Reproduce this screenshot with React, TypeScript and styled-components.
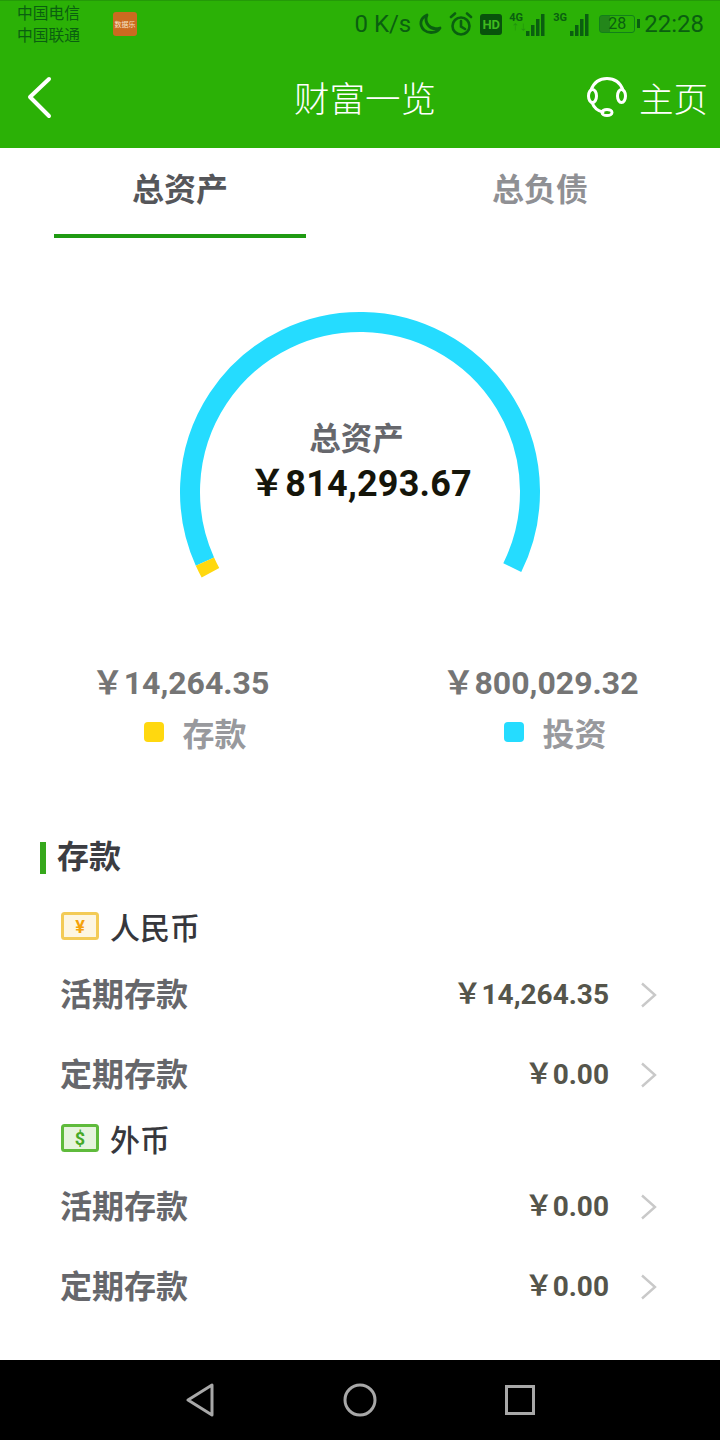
import React from "react";
import styled, { createGlobalStyle } from "styled-components";

const cjk = `"Noto Sans CJK SC", "Noto Sans", sans-serif`;
const num = `Roboto, "Noto Sans CJK SC", sans-serif`;
const statusInk = "#0a5f10";

const Global = createGlobalStyle`
  html, body { margin: 0; padding: 0; background: #fff; }
  body { font-family: ${cjk}; }
`;

const Page = styled.div`
  width: 720px;
  height: 1440px;
  display: flex;
  flex-direction: column;
  overflow: hidden;
  background: #fff;
`;

const Top = styled.header`
  height: 148px;
  flex: none;
  background: #2bb106;
  border-top: 1px solid #249a08;
  box-sizing: border-box;
  display: flex;
  flex-direction: column;
`;

const StatusBar = styled.div`
  height: 46px;
  flex: none;
  display: flex;
  align-items: center;
  padding: 0 16px 0 17px;
  color: ${statusInk};
`;

const Carrier = styled.div`
  font-size: 15.75px;
  line-height: 22px;
  width: 96px;
`;

const AppIcon = styled.div`
  width: 24px;
  height: 24px;
  border-radius: 3px;
  background: #cc6a20;
  color: #f6e3c8;
  font-size: 7px;
  line-height: 24px;
  text-align: center;
  white-space: nowrap;
  overflow: hidden;
`;

const StatusRight = styled.div`
  margin-left: auto;
  display: flex;
  align-items: center;
`;

const Speed = styled.span`
  font-family: ${num};
  font-size: 24px;
  margin-right: 7px;
`;

const Clock = styled.span`
  font-family: ${num};
  font-size: 24px;
  margin-left: 4px;
`;

const NavRow = styled.div`
  flex: 1;
  display: flex;
  align-items: center;
  padding: 0 12px 2px 26px;
  color: #fff;
  position: relative;
`;

const BackSvg = styled.svg`
  margin-top: 2px;
`;

const NavTitle = styled.div`
  position: absolute;
  left: 294px;
  font-size: 35.5px;
  font-weight: 300;
  line-height: 50px;
`;

const NavAction = styled.div`
  margin-left: auto;
  display: flex;
  align-items: center;
  gap: 12px;
  font-size: 34.5px;
  font-weight: 300;
`;

const Tabs = styled.div`
  height: 90px;
  flex: none;
  display: grid;
  grid-template-columns: 360px 360px;
`;

const Tab = styled.div<{ $active?: boolean }>`
  position: relative;
  display: flex;
  align-items: center;
  justify-content: center;
  padding-bottom: 12px;
  box-sizing: border-box;
  font-size: 32px;
  font-weight: 700;
  color: ${(p) => (p.$active ? "#55565a" : "#8f9094")};

  &::after {
    content: "";
    display: ${(p) => (p.$active ? "block" : "none")};
    position: absolute;
    left: 54px;
    bottom: 0;
    width: 252px;
    height: 4px;
    background: #1f9a12;
  }
`;

const GaugeWrap = styled.div`
  margin-top: 64px;
  height: 290px;
  flex: none;
  display: grid;
  justify-content: center;
`;

const GaugeSvg = styled.svg`
  grid-area: 1 / 1;
  display: block;
`;

const GaugeCenter = styled.div`
  grid-area: 1 / 1;
  display: flex;
  flex-direction: column;
  align-items: center;
  padding-top: 111px;
  margin-left: 1px;
`;

const GaugeLabel = styled.div`
  font-size: 31.5px;
  font-weight: 700;
  line-height: 46px;
  color: #66676c;
  margin-left: -8px;
`;

const GaugeAmount = styled.div`
  font-family: ${num};
  font-size: 36px;
  font-weight: 700;
  line-height: 46px;
  margin-top: 2px;
  letter-spacing: 0.2px;
  color: #15150a;
`;

const Stats = styled.div`
  margin-top: 68px;
  display: grid;
  grid-template-columns: 360px 360px;
  flex: none;
`;

const Stat = styled.div`
  display: flex;
  flex-direction: column;
  align-items: center;
  padding-left: 1px;
`;

const StatAmount = styled.div`
  font-family: ${num};
  font-size: 32px;
  font-weight: 700;
  line-height: 46px;
  color: #757575;
`;

const Legend = styled.div`
  display: flex;
  align-items: center;
  gap: 18px;
  font-size: 32px;
  font-weight: 700;
  line-height: 52px;
  color: #98999d;
  padding-left: 30px;
`;

const Dot = styled.span<{ $color: string }>`
  width: 20px;
  height: 20px;
  border-radius: 4px;
  background: ${(p) => p.$color};
`;

const Section = styled.section`
  margin-top: 73px;
  padding-left: 40px;
  display: flex;
  flex-direction: column;
`;

const SectionTitle = styled.h2`
  margin: 0 0 23px;
  height: 46px;
  display: flex;
  align-items: center;
  font-size: 32px;
  font-weight: 700;
  color: #3c3d42;

  &::before {
    content: "";
    width: 6px;
    height: 32px;
    background: #36a81c;
    margin: 8px 11px 0 0;
  }
`;

const Currency = styled.div`
  height: 52px;
  margin-left: 21px;
  display: flex;
  align-items: center;
  gap: 11px;
  font-size: 30px;
  font-weight: 500;
  color: #36373c;
`;

const Row = styled.div`
  height: 80px;
  margin-left: 20px;
  padding-right: 62px;
  display: flex;
  align-items: center;
  justify-content: space-between;
`;

const RowLabel = styled.span`
  font-size: 32px;
  font-weight: 700;
  color: #66676b;
`;

const RowValue = styled.span`
  display: flex;
  align-items: center;
  gap: 31px;
  font-family: ${num};
  font-size: 28px;
  font-weight: 700;
  color: #55554b;
`;

const ChevronSvg = styled.svg`
  margin-top: 6px;
`;

const BottomBar = styled.nav`
  margin-top: auto;
  height: 80px;
  flex: none;
  background: #000;
  display: flex;
  align-items: center;
  justify-content: center;
  gap: 128px;
`;

function Moon() {
  return (
    <svg width="24" height="22" viewBox="0 0 24 22" fill="none">
      <path d="M9 2C6 9 11 18 22 15C19 20 11 21 6 17C1 12 2 5 9 2Z" stroke={statusInk} strokeWidth="2.8" strokeLinejoin="round" />
    </svg>
  );
}

const AlarmSvg = styled.svg`
  margin: 0 7px;
`;

function Alarm() {
  return (
    <AlarmSvg width="24" height="24" viewBox="0 0 24 24" fill="none" stroke={statusInk} strokeWidth="2.6">
      <circle cx="12" cy="14" r="8.5" />
      <path d="M12 9v5.5l4 2.5M2 5l4-3.5M22 5l-4-3.5" strokeLinecap="round" />
    </AlarmSvg>
  );
}

const HdBadge = styled.span`
  width: 22px;
  height: 21px;
  border-radius: 3px;
  background: #08530c;
  color: #3fbb1e;
  font-family: ${num};
  font-size: 13px;
  font-weight: 700;
  line-height: 21px;
  text-align: center;
  margin-right: 7px;
`;

const SignalWrap = styled.span`
  position: relative;
  width: 37px;
  height: 26px;
  margin-right: 7px;
`;

const SignalTag = styled.span`
  position: absolute;
  left: 0;
  top: 1px;
  font-family: ${num};
  font-size: 11px;
  font-weight: 700;
  line-height: 11px;
`;

const SignalSub = styled.span`
  position: absolute;
  left: 2px;
  top: 13px;
  font-family: ${num};
  font-size: 8px;
  line-height: 8px;
  color: #1f8f10;
`;

function Signal({ tag, sub }: { tag: string; sub?: boolean }) {
  return (
    <SignalWrap>
      <SignalTag>{tag}</SignalTag>
      {sub && <SignalSub>↑↓</SignalSub>}
      <svg width="37" height="26" viewBox="0 0 37 26" fill={statusInk}>
        <rect x="17" y="20" width="3.5" height="5" />
        <rect x="22" y="14" width="3.5" height="11" />
        <rect x="27" y="8" width="3.5" height="17" />
        <rect x="32" y="3" width="3.5" height="22" />
      </svg>
    </SignalWrap>
  );
}

const Battery = styled.span`
  position: relative;
  width: 36px;
  height: 18px;
  border: 1.5px solid #12801a;
  border-radius: 3px;
  box-sizing: border-box;
  margin: 0 5px 0 2px;
  font-family: ${num};
  font-size: 16px;
  line-height: 15px;
  text-align: center;
  background: linear-gradient(90deg, #23861a 30%, transparent 30%);

  &::after {
    content: "";
    position: absolute;
    right: -6px;
    top: 3px;
    width: 3px;
    height: 9px;
    background: ${statusInk};
  }
`;

function Headset() {
  return (
    <svg width="40" height="40" viewBox="0 0 40 40" fill="none" stroke="#fff" strokeWidth="3" strokeLinecap="round">
      <path d="M4 13C7 5 13 1.5 20 1.5C27 1.5 33 5 36 13" />
      <ellipse cx="5.5" cy="19" rx="4" ry="6.5" />
      <ellipse cx="34.5" cy="19" rx="4" ry="6.5" />
      <path d="M5 25.5C7 31 11 34 16 35" />
      <ellipse cx="20" cy="35.5" rx="5" ry="3" />
    </svg>
  );
}

function Chevron() {
  return (
    <ChevronSvg width="18" height="26" viewBox="0 0 18 26" fill="none" stroke="#c9c9c9" strokeWidth="2.4">
      <path d="M2 1.5L15 13L2 24.5" />
    </ChevronSvg>
  );
}

function Gauge() {
  const r = 170;
  const cx = 190;
  const cy = 190;
  const point = (deg: number) => {
    const a = (deg * Math.PI) / 180;
    return `${(cx + r * Math.cos(a)).toFixed(2)} ${(cy - r * Math.sin(a)).toFixed(2)}`;
  };
  // angles counted anticlockwise from the right
  const start = 208.4;
  const split = 204.2;
  const end = -26.4;
  return (
    <GaugeSvg width="380" height="290" viewBox="0 0 380 290" fill="none" strokeWidth="20">
      <path d={`M${point(split)} A${r} ${r} 0 1 1 ${point(end)}`} stroke="#25dcff" />
      <path d={`M${point(start)} A${r} ${r} 0 0 1 ${point(split)}`} stroke="#ffd80f" />
    </GaugeSvg>
  );
}

const rows = (first: string) => [
  { label: "活期存款", value: first },
  { label: "定期存款", value: "￥0.00" },
];

function BalanceRows({ first }: { first: string }) {
  return (
    <>
      {rows(first).map((r) => (
        <Row key={r.label}>
          <RowLabel>{r.label}</RowLabel>
          <RowValue>
            {r.value}
            <Chevron />
          </RowValue>
        </Row>
      ))}
    </>
  );
}

function Note({ stroke, fill, mark }: { stroke: string; fill: string; mark: string }) {
  return (
    <svg width="38" height="28" viewBox="0 0 38 28">
      <rect x="1.5" y="1.5" width="35" height="25" rx="2" fill={fill} stroke={stroke} strokeWidth="3" />
      <text x="19" y="20.5" textAnchor="middle" fontSize="18" fontWeight="700" fontFamily="Roboto, sans-serif" fill={mark === "$" ? "#46a928" : "#f5a20a"}>
        {mark}
      </text>
    </svg>
  );
}

export default function App() {
  return (
    <Page>
      <Global />
      <Top>
        <StatusBar>
          <Carrier>
            中国电信
            <br />
            中国联通
          </Carrier>
          <AppIcon>数据乐</AppIcon>
          <StatusRight>
            <Speed>0 K/s</Speed>
            <Moon />
            <Alarm />
            <HdBadge>HD</HdBadge>
            <Signal tag="4G" sub />
            <Signal tag="3G" />
            <Battery>28</Battery>
            <Clock>22:28</Clock>
          </StatusRight>
        </StatusBar>
        <NavRow>
          <BackSvg width="28" height="44" viewBox="0 0 28 44" fill="none" stroke="#fff" strokeWidth="4" strokeLinecap="round" strokeLinejoin="round">
            <path d="M23 3L4 21L23 40" />
          </BackSvg>
          <NavTitle>财富一览</NavTitle>
          <NavAction>
            <Headset />
            主页
          </NavAction>
        </NavRow>
      </Top>

      <Tabs>
        <Tab $active>总资产</Tab>
        <Tab>总负债</Tab>
      </Tabs>

      <GaugeWrap>
        <Gauge />
        <GaugeCenter>
          <GaugeLabel>总资产</GaugeLabel>
          <GaugeAmount>￥814,293.67</GaugeAmount>
        </GaugeCenter>
      </GaugeWrap>

      <Stats>
        <Stat>
          <StatAmount>￥14,264.35</StatAmount>
          <Legend>
            <Dot $color="#ffd80f" />
            存款
          </Legend>
        </Stat>
        <Stat>
          <StatAmount>￥800,029.32</StatAmount>
          <Legend>
            <Dot $color="#25dcff" />
            投资
          </Legend>
        </Stat>
      </Stats>

      <Section>
        <SectionTitle>存款</SectionTitle>
        <Currency>
          <Note stroke="#f3cb57" fill="#fdf6e2" mark="¥" />
          人民币
        </Currency>
        <BalanceRows first="￥14,264.35" />
        <Currency>
          <Note stroke="#5fbb3c" fill="#e6f4de" mark="$" />
          外币
        </Currency>
        <BalanceRows first="￥0.00" />
      </Section>

      <BottomBar>
        <svg width="30" height="34" viewBox="0 0 30 34" fill="none" stroke="#a8a8a8" strokeWidth="3" strokeLinejoin="round">
          <path d="M27 2V32L3 17Z" />
        </svg>
        <svg width="34" height="34" viewBox="0 0 34 34" fill="none" stroke="#a8a8a8" strokeWidth="3">
          <circle cx="17" cy="17" r="15" />
        </svg>
        <svg width="30" height="30" viewBox="0 0 30 30" fill="none" stroke="#a8a8a8" strokeWidth="3">
          <rect x="1.5" y="1.5" width="27" height="27" />
        </svg>
      </BottomBar>
    </Page>
  );
}
